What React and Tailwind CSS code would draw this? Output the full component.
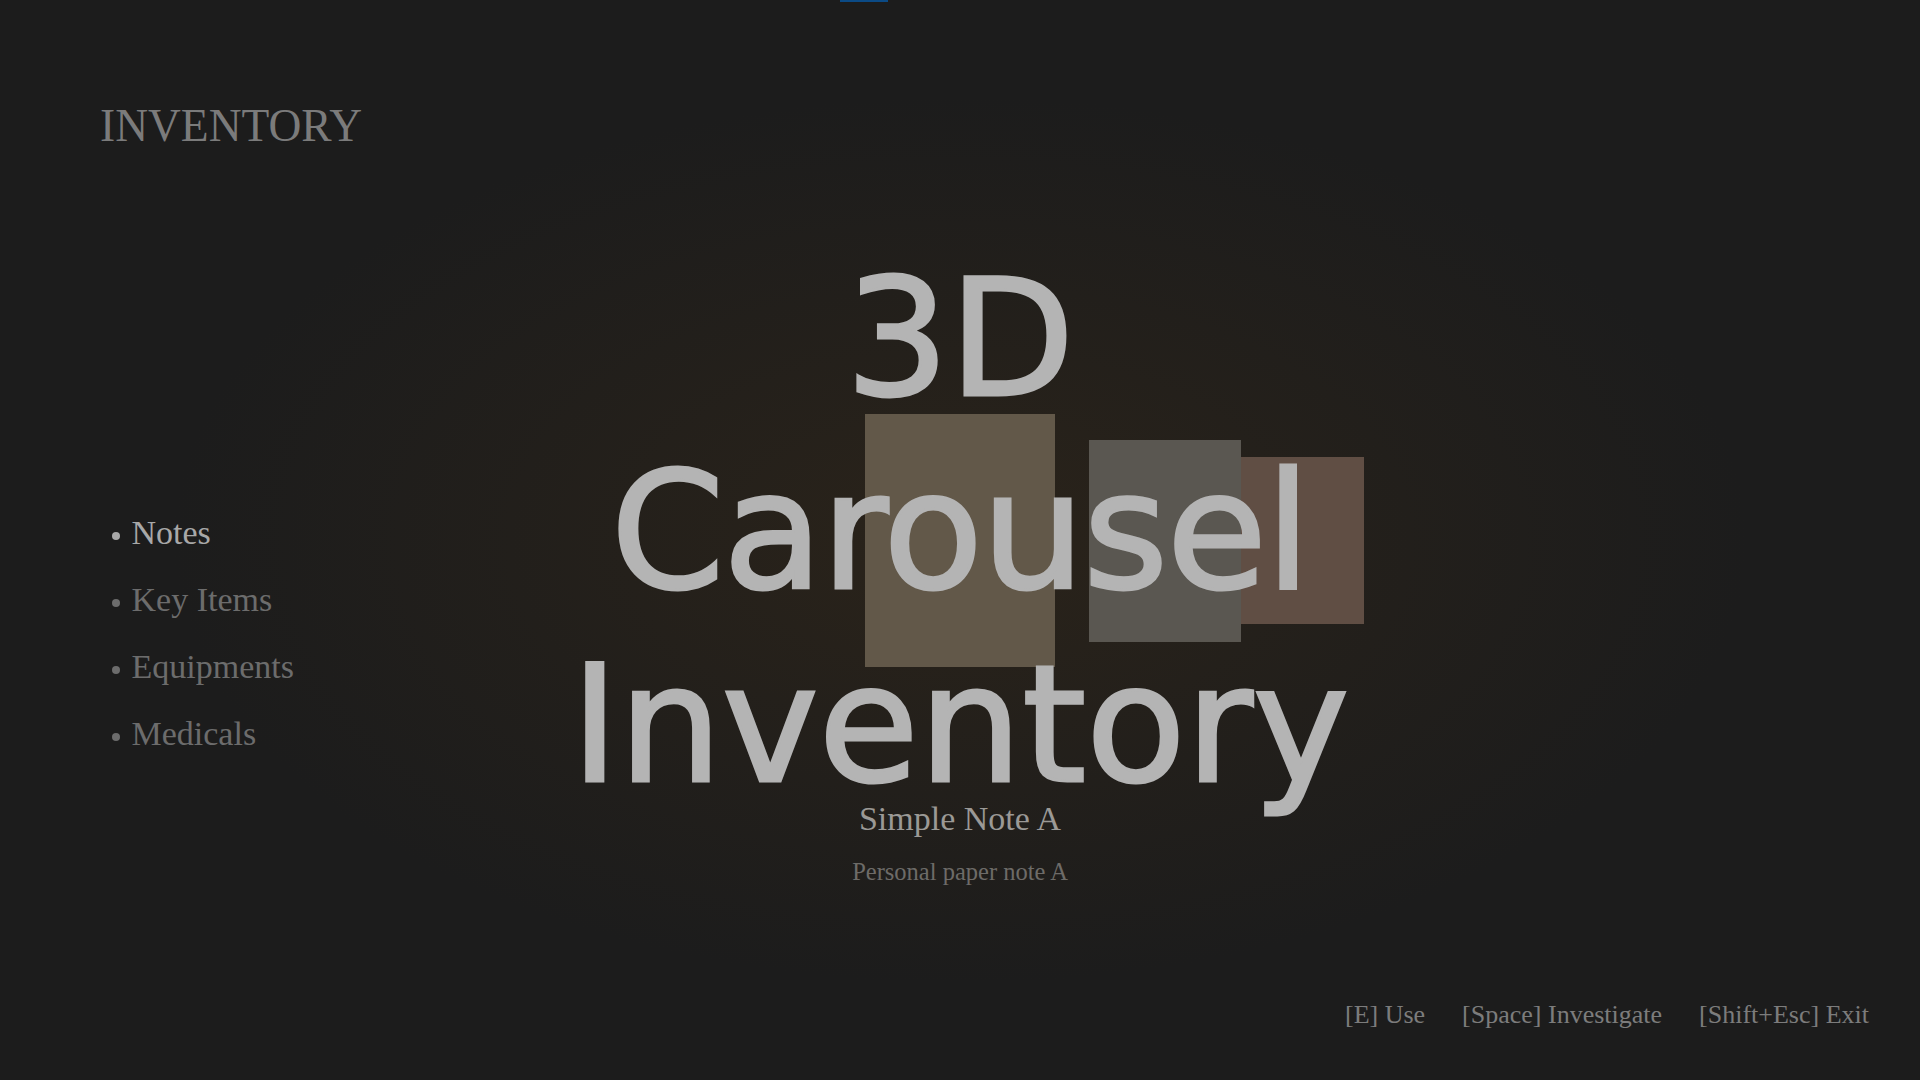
import React from "react";

const menu = [
  { label: "Notes", active: true },
  { label: "Key Items" },
  { label: "Equipments" },
  { label: "Medicals" },
];

export default function App() {
  return (
    <div className="flex h-[1080px] w-[1920px] flex-col overflow-hidden bg-[#1c1c1c] bg-[radial-gradient(ellipse_at_center,#2a231a_0%,#1c1c1c_58%)] font-['Liberation_Serif',serif]">
      <div className="ml-[840px] h-[2px] w-[48px] shrink-0 bg-[#0b4a85]" />

      <header className="px-[100px] pt-[101px]">
        <h1 className="text-[45.5px] leading-none font-normal text-[#7b7b7b]">INVENTORY</h1>
      </header>

      <main className="grid grid-cols-[1fr_auto_1fr]">
        <nav className="pl-[112px] pt-[367.5px]">
          <ul className="flex flex-col gap-[33px]">
            {menu.map((m) => (
              <li
                key={m.label}
                className={
                  "flex items-center text-[34px] leading-none " +
                  (m.active ? "text-[#a8a8a8]" : "text-[#6c6c6c]")
                }
              >
                <span
                  className={
                    "mt-[5px] mr-[11.5px] h-[8px] w-[8px] rounded-full " +
                    (m.active ? "bg-[#a8a8a8]" : "bg-[#6c6c6c]")
                  }
                />
                <span>{m.label}</span>
              </li>
            ))}
          </ul>
        </nav>

        <section className="flex flex-col items-center pt-[93px]">
          <div className="relative h-[560px]">
            <div className="absolute top-[215px] left-[calc(50%+279px)] h-[167px] w-[125px] bg-[#604e44]" />
            <div className="absolute top-[198px] left-[calc(50%+129px)] h-[202px] w-[152px] bg-[#5a5751]" />
            <div className="absolute top-[172px] left-[calc(50%-95px)] h-[253px] w-[190px] bg-[#625849]" />
            <div className="relative z-10 text-center font-['DejaVu_Sans',sans-serif] text-[163px] leading-[193px] text-[#b4b4b4] [-webkit-text-stroke:3px_#b4b4b4]">
              <div>3D</div>
              <div className="tracking-[-1.5px]">Carousel</div>
              <div>Inventory</div>
            </div>
          </div>
          <div className="text-center text-[34px] leading-none text-[#9b9996]">Simple Note A</div>
          <div className="mt-[24px] text-center text-[24.5px] leading-none text-[#6d6b68]">Personal paper note A</div>
        </section>

        <div />
      </main>

      <footer className="mt-auto flex justify-end gap-[37px] pr-[51px] pb-[52px] text-[26px] leading-none text-[#7c7c7c]">
        <span>[E] Use</span>
        <span>[Space] Investigate</span>
        <span>[Shift+Esc] Exit</span>
      </footer>
    </div>
  );
}
